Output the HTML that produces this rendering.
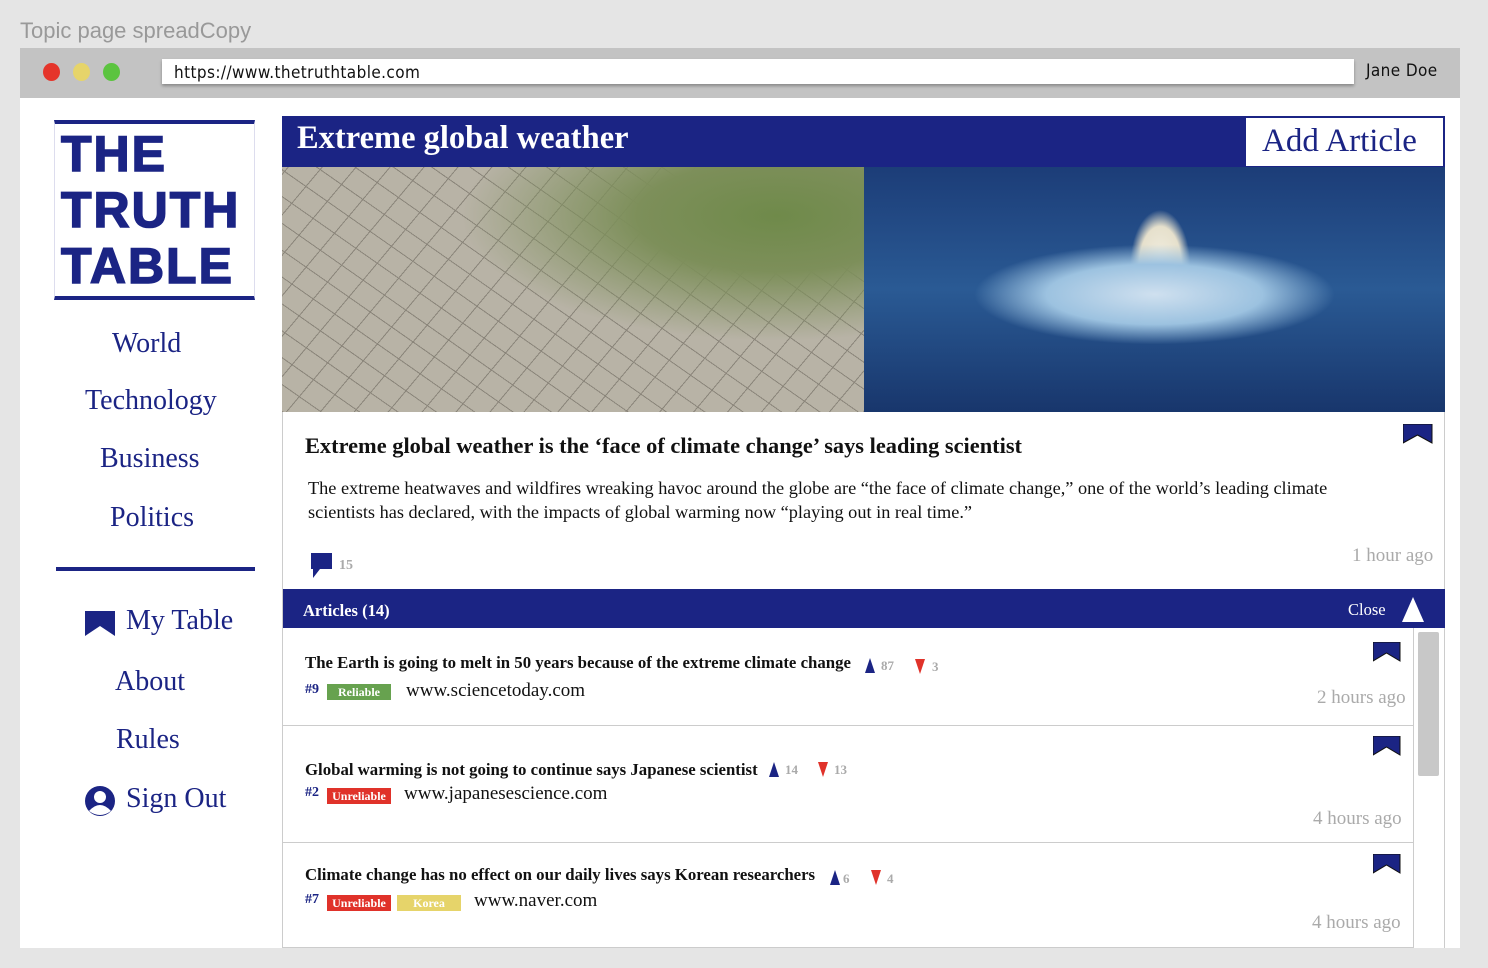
<!DOCTYPE html>
<html><head><meta charset="utf-8"><style>
*{margin:0;padding:0;box-sizing:border-box}
body{width:1488px;height:968px;background:#e5e5e5;position:relative;overflow:hidden;font-family:"Liberation Serif",serif;color:#111}
.a{position:absolute}
.navy{color:#1b2484}
.nav{position:absolute;font-size:28px;color:#1b2484;white-space:nowrap}
.bm{position:absolute;width:30px;height:20px}
.art{position:absolute;left:283px;width:1130px;border-bottom:1px solid #ccc;background:#fff}
.t{font-weight:bold;font-size:16.8px;position:absolute;white-space:nowrap}
.tag{position:absolute;color:#fff;font-size:12px;font-weight:bold;height:16px;line-height:17px;text-align:center;width:64px}
.num{font-size:13px;color:#aaa;font-weight:bold}
.ago{position:absolute;font-size:19px;color:#aaa;white-space:nowrap}
.url{position:absolute;font-size:19px;white-space:nowrap}
.rk{position:absolute;font-size:14px;font-weight:bold;color:#1b2484}
</style></head><body>
<div class="a" style="left:20px;top:18px;font-family:'Liberation Sans',sans-serif;font-size:22px;color:#999">Topic page spreadCopy</div>
<div class="a" style="left:20px;top:48px;width:1440px;height:50px;background:#c3c3c3"></div>
<div class="a" style="left:43px;top:63px;width:17px;height:18px;border-radius:50%;background:#e5352b"></div>
<div class="a" style="left:73px;top:63px;width:17px;height:18px;border-radius:50%;background:#e6d46a"></div>
<div class="a" style="left:103px;top:63px;width:17px;height:18px;border-radius:50%;background:#5bc43f"></div>
<div class="a" style="left:162px;top:59px;width:1192px;height:25px;background:#fff;box-shadow:0 2px 3px rgba(0,0,0,.3);font-family:'DejaVu Sans Condensed','DejaVu Sans',sans-serif;font-size:17px;padding:4px 12px;letter-spacing:.4px">https://www.thetruthtable.com</div>
<div class="a" style="left:1366px;top:61px;font-family:'DejaVu Sans Condensed','DejaVu Sans',sans-serif;font-size:17px;letter-spacing:.4px">Jane Doe</div>
<div class="a" style="left:20px;top:98px;width:1440px;height:850px;background:#fff"></div>

<div class="a" style="left:54px;top:120px;width:201px;height:180px;border-top:4px solid #1b2484;border-bottom:4px solid #1b2484;border-left:1px solid #dde;border-right:1px solid #dde"></div>
<div class="a navy" style="left:61px;top:126px;font-family:'Liberation Sans',sans-serif;font-weight:900;font-size:50px;line-height:56px;letter-spacing:2px;-webkit-text-stroke:1.5px #1b2484">THE<br>TRUTH<br>TABLE</div>
<div class="nav" style="left:112px;top:328px">World</div>
<div class="nav" style="left:85px;top:385px">Technology</div>
<div class="nav" style="left:100px;top:443px">Business</div>
<div class="nav" style="left:110px;top:502px">Politics</div>
<div class="a" style="left:56px;top:567px;width:199px;height:4px;background:#1b2484"></div>
<svg class="a" style="left:85px;top:611px" width="30" height="25"><path d="M0 0H30V25L15 15L0 25Z" fill="#1b2484"/></svg>
<div class="nav" style="left:126px;top:605px">My Table</div>
<div class="nav" style="left:115px;top:666px">About</div>
<div class="nav" style="left:116px;top:724px">Rules</div>
<svg class="a" style="left:84px;top:785px" width="32" height="32"><circle cx="16" cy="16" r="15" fill="#1b2484"/><circle cx="16" cy="12" r="6" fill="#fff"/><path d="M5 26Q16 14 27 26Q16 34 5 26Z" fill="#fff"/></svg>
<div class="nav" style="left:126px;top:783px">Sign Out</div>

<div class="a" style="left:282px;top:116px;width:1163px;height:832px;border:1px solid #ccc;border-top:none"></div>
<div class="a" style="left:282px;top:116px;width:1163px;height:51px;background:#1b2484"></div>
<div class="a" style="left:297px;top:120px;color:#fff;font-weight:bold;font-size:32.5px">Extreme global weather</div>
<div class="a" style="left:1245px;top:117px;width:199px;height:50px;background:#fff;border:1px solid #1b2484;color:#1b2484;font-size:33px;padding:5px 0 0 16px;white-space:nowrap">Add Article</div>
<div class="a" style="left:282px;top:167px;width:582px;height:245px;background:radial-gradient(ellipse at 85% 20%,#6f8a4a 0,#7d8f5a 20%,transparent 45%),repeating-linear-gradient(35deg,#8a857a 0 1px,transparent 1px 22px),repeating-linear-gradient(-50deg,#8a857a 0 1px,transparent 1px 26px),#b8b3a6"></div>
<div class="a" style="left:864px;top:167px;width:581px;height:245px;background:radial-gradient(ellipse 180px 50px at 50% 52%,#cfe0ef 0,#9cc2e0 60%,transparent 100%),radial-gradient(ellipse 30px 55px at 51% 40%,#f2efe2 0,#e6e0cc 70%,transparent 100%),linear-gradient(#1c3d78,#2a5a94 50%,#18366c)"></div>

<div class="a" style="left:305px;top:433px;font-weight:bold;font-size:22.4px;white-space:nowrap">Extreme global weather is the ‘face of climate change’ says leading scientist</div>
<svg class="bm" style="left:1403px;top:424px"><path d="M0 0H29V19L14.5 11L0 19Z" fill="#1b2484" stroke="#111" stroke-width="1"/></svg>
<div class="a" style="left:308px;top:476px;width:1080px;font-size:18.3px;line-height:24px">The extreme heatwaves and wildfires wreaking havoc around the globe are “the face of climate change,” one of the world’s leading climate scientists has declared, with the impacts of global warming now “playing out in real time.”</div>
<svg class="a" style="left:311px;top:553px" width="22" height="26"><path d="M0 0H21V16H9L2 25V16H0Z" fill="#1b2484"/></svg>
<div class="a num" style="left:339px;top:558px;font-size:14px">15</div>
<div class="ago" style="left:1352px;top:545px">1 hour ago</div>

<div class="a" style="left:283px;top:589px;width:1162px;height:39px;background:#1b2484"></div>
<div class="a" style="left:303px;top:601px;color:#fff;font-weight:bold;font-size:16.5px">Articles (14)</div>
<div class="a" style="left:1348px;top:600px;color:#fff;font-size:16.5px">Close</div>
<svg class="a" style="left:1402px;top:597px" width="22" height="25"><path d="M11 0L22 25H0Z" fill="#fff"/></svg>

<div class="a" style="left:1413px;top:628px;width:31px;height:320px;border-left:1px solid #ccc;background:#fff"></div>
<div class="a" style="left:1418px;top:632px;width:21px;height:144px;background:#c8c8c8;border-radius:2px"></div>

<div class="art" style="top:628px;height:98px"></div>
<div class="t" style="left:305px;top:653px">The Earth is going to melt in 50 years because of the extreme climate change</div>
<svg class="a" style="left:864px;top:658px" width="12" height="16"><path d="M6 0L11 15H1Z" fill="#1b2484"/></svg>
<div class="a num" style="left:881px;top:658px">87</div>
<svg class="a" style="left:914px;top:659px" width="12" height="16"><path d="M1 0H11L6 15Z" fill="#e0322a"/></svg>
<div class="a num" style="left:932px;top:659px">3</div>
<div class="rk" style="left:305px;top:682px">#9</div>
<div class="tag" style="left:327px;top:684px;background:#67a24f">Reliable</div>
<div class="url" style="left:406px;top:680px">www.sciencetoday.com</div>
<svg class="bm" style="left:1373px;top:642px"><path d="M0 0H27V19L13.5 11L0 19Z" fill="#1b2484" stroke="#111"/></svg>
<div class="ago" style="left:1317px;top:687px">2 hours ago</div>

<div class="art" style="top:726px;height:117px"></div>
<div class="t" style="left:305px;top:760px">Global warming is not going to continue says Japanese scientist</div>
<svg class="a" style="left:768px;top:762px" width="12" height="16"><path d="M6 0L11 15H1Z" fill="#1b2484"/></svg>
<div class="a num" style="left:785px;top:762px">14</div>
<svg class="a" style="left:817px;top:762px" width="12" height="16"><path d="M1 0H11L6 15Z" fill="#e0322a"/></svg>
<div class="a num" style="left:834px;top:762px">13</div>
<div class="rk" style="left:305px;top:785px">#2</div>
<div class="tag" style="left:327px;top:788px;background:#e0322a">Unreliable</div>
<div class="url" style="left:404px;top:783px">www.japanesescience.com</div>
<svg class="bm" style="left:1373px;top:736px"><path d="M0 0H27V19L13.5 11L0 19Z" fill="#1b2484" stroke="#111"/></svg>
<div class="ago" style="left:1313px;top:808px">4 hours ago</div>

<div class="t" style="left:305px;top:865px">Climate change has no effect on our daily lives says Korean researchers</div>
<svg class="a" style="left:829px;top:870px" width="12" height="16"><path d="M6 0L11 15H1Z" fill="#1b2484"/></svg>
<div class="a num" style="left:843px;top:871px">6</div>
<svg class="a" style="left:870px;top:870px" width="12" height="16"><path d="M1 0H11L6 15Z" fill="#e0322a"/></svg>
<div class="a num" style="left:887px;top:871px">4</div>
<div class="rk" style="left:305px;top:892px">#7</div>
<div class="tag" style="left:327px;top:895px;background:#e0322a">Unreliable</div>
<div class="tag" style="left:397px;top:895px;background:#e6d46a">Korea</div>
<div class="url" style="left:474px;top:890px">www.naver.com</div>
<svg class="bm" style="left:1373px;top:854px"><path d="M0 0H27V19L13.5 11L0 19Z" fill="#1b2484" stroke="#111"/></svg>
<div class="ago" style="left:1312px;top:912px">4 hours ago</div>
</body></html>
